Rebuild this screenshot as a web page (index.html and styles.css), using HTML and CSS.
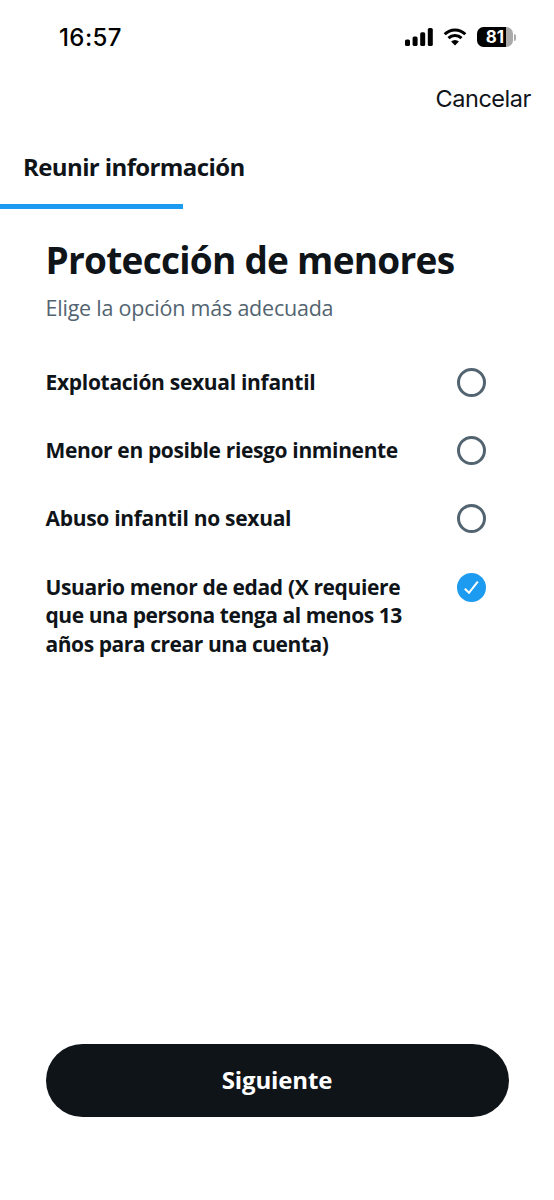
FILE: index.html
```
<!DOCTYPE html>
<html lang="es">
<head>
<meta charset="utf-8">
<title>Protección de menores</title>
<link rel="stylesheet" href="styles.css">
</head>
<body>
<div class="screen">
  <header class="status">
    <span class="time">16:57</span>
    <div class="indicators">
      <svg class="signal" width="28" height="18" viewBox="0 0 28 18"><rect x="0" y="11.5" width="5" height="6.5" rx="1.6"/><rect x="7.6" y="8.5" width="5" height="9.5" rx="1.6"/><rect x="15.2" y="4.3" width="5" height="13.7" rx="1.6"/><rect x="22.8" y="0" width="5" height="18" rx="1.6"/></svg>
      <svg class="wifi" width="24" height="18" viewBox="0 0 24 18"><path d="M1.7 6.2a14.6 14.6 0 0 1 20.6 0M5.5 10.1a9.3 9.3 0 0 1 13 0" fill="none" stroke="#000" stroke-width="3"/><path d="M12 17.6l-3.9-4a5.6 5.6 0 0 1 7.8 0z"/></svg>
      <div class="battery"><span class="level">81</span></div>
      <span class="battery-tip"></span>
    </div>
  </header>
  <nav class="nav"><a class="cancel">Cancelar</a></nav>
  <div class="step"><span>Reunir información</span></div>
  <div class="progress"></div>
  <main class="content">
    <h1>Protección de menores</h1>
    <p class="subtitle">Elige la opción más adecuada</p>
    <ul class="options">
      <li><span class="label wide">Explotación sexual infantil</span><span class="radio"></span></li>
      <li><span class="label">Menor en posible riesgo inminente</span><span class="radio"></span></li>
      <li><span class="label wide">Abuso infantil no sexual</span><span class="radio"></span></li>
      <li><span class="label"><span>Usuario menor de edad (X requiere</span><br><span class="tight">que una persona tenga al menos 13</span><br><span class="tight">años para crear una cuenta)</span></span><span class="radio checked"><svg width="29" height="29" viewBox="0 0 29 29"><path d="M7.8 15.7l4.2 4.1 8.8-11.2" fill="none" stroke="#fff" stroke-width="2"/></svg></span></li>
    </ul>
  </main>
  <footer class="footer"><button class="next">Siguiente</button></footer>
</div>
</body>
</html>
```
FILE: styles.css
```
* { box-sizing: border-box; }
body {
  margin: 0;
  background: #fff;
  color: #0f1419;
  font-family: "Open Sans", "Noto Sans", sans-serif;
}
.screen {
  width: 554px;
  height: 1200px;
  display: flex;
  flex-direction: column;
  background: #fff;
}
.status {
  height: 74px;
  padding: 0 41px 0 59px;
  display: flex;
  align-items: center;
  justify-content: space-between;
  color: #000;
  font-family: Inter, sans-serif;
}
.time { font-size: 24px; font-weight: 550; letter-spacing: 0.4px; }
.indicators { display: flex; align-items: center; }
.wifi { margin-left: 10px; }
.battery {
  margin-left: 10px;
  width: 36px;
  height: 20px;
  border-radius: 6.5px;
  background: linear-gradient(to right, #000 29px, #aaa 29px);
  color: #fff;
  font-size: 17px;
  font-weight: 700;
  line-height: 20px;
  text-align: center;
}
.battery-tip {
  width: 2px;
  height: 7px;
  margin: 0 -3px 0 1px;
  border-radius: 0 2px 2px 0;
  background: #aaa;
}
.nav {
  height: 48px;
  padding-right: 23px;
  display: flex;
  align-items: center;
  justify-content: flex-end;
}
.cancel { font: 400 23.5px Inter, sans-serif; letter-spacing: -0.45px; }
.step {
  height: 82px;
  padding: 6px 23px 0;
  display: flex;
  align-items: center;
  font-size: 24px;
  font-weight: 700;
  letter-spacing: -0.61px;
}
.progress { width: 183px; height: 5px; background: #1d9bf0; }
.content { flex: 1; padding: 0 68px 0 45.5px; }
h1 {
  margin: 26px 0 0;
  font-size: 37px;
  line-height: 50px;
  font-weight: 700;
  letter-spacing: -0.74px;
  white-space: nowrap;
}
.subtitle {
  margin: 8px 0 0;
  color: #536471;
  font-size: 21.5px;
  line-height: 30px;
  letter-spacing: -0.22px;
}
.options {
  margin: 45px 0 0;
  padding: 0;
  list-style: none;
  display: flex;
  flex-direction: column;
  gap: 39.2px;
}
.options li { display: flex; justify-content: space-between; }
.label {
  font-size: 21px;
  line-height: 28.5px;
  font-weight: 700;
  letter-spacing: -0.36px;
  white-space: nowrap;
}
.wide { letter-spacing: -0.3px; }
.tight { letter-spacing: -0.44px; }
.radio {
  width: 29px;
  height: 29px;
  border: 3px solid #536471;
  border-radius: 50%;
}
.checked { border: 0; background: #1d9bf0; }
.checked svg { display: block; }
.footer { padding: 0 45px 83px 45.5px; }
.next {
  display: block;
  width: 463px;
  height: 73.5px;
  padding: 0 0 2px;
  border: 0;
  border-radius: 37px;
  background: #0f1419;
  color: #fff;
  font: 700 24px "Open Sans", sans-serif;
  letter-spacing: -0.15px;
}
```
